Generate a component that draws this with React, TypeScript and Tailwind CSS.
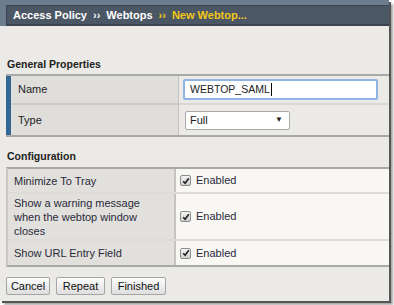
import React from "react";

const font = { fontFamily: '"Liberation Sans", Arial, sans-serif' };

function Check() {
  return (
    <span className="inline-flex h-[11px] w-[11px] items-center justify-center rounded-[2px] border border-[#8d8d8d] bg-gradient-to-b from-[#f4f4f4] to-[#cfcfcf]">
      <svg width="8" height="8" viewBox="0 0 8 8">
        <path d="M1.2 4.2 L3.1 6.2 L6.8 1.2" fill="none" stroke="#222" strokeWidth="1.6" />
      </svg>
    </span>
  );
}

function Btn({ children, w }: { children: React.ReactNode; w: string }) {
  return (
    <button
      className={`h-[18px] ${w} rounded-[2px] border border-[#a5a5a5] bg-gradient-to-b from-[#fdfdfd] to-[#dedede] text-[11px] leading-none text-[#111]`}
    >
      {children}
    </button>
  );
}

export default function App() {
  return (
    <div className="h-[305px] w-[394px] bg-white" style={font}>
      <div className="h-[301px] w-[389px] bg-[#ebeae6] shadow-[2px_2px_0_#555,4px_4px_2px_rgba(0,0,0,0.35)] overflow-hidden">
        <div className="bg-[#6e7d8e] pl-[6px] pt-[5px]">
          <div className="flex h-[21px] items-center border-b-2 border-l border-t border-[#3b4450] bg-[#4b5765] pl-[6px] text-[11px] font-bold text-white">
            <span>Access Policy</span>
            <span className="mx-[6px] text-[11px] leading-none">››</span>
            <span>Webtops</span>
            <span className="mx-[6px] text-[11px] leading-none text-[#f2c818]">››</span>
            <span className="text-[#f2c818]">New Webtop...</span>
          </div>
        </div>

        <div className="pl-[6px]">
          <div className="pl-[1px] pt-[32px] pb-[3px] text-[10.5px] font-bold leading-[13px] text-[#222]">General Properties</div>
          <div className="border-y-2 border-[#a9a9a7]">
            <div className="flex border-l-[5px] border-[#336597]">
              <div className="flex w-[168px] flex-col border-r border-[#c4c3bf] bg-[#dfdedb]">
                <div className="flex h-[29px] items-center border-b-2 border-[#cbcac6] pl-[7px] text-[11px] text-[#222]">Name</div>
                <div className="flex h-[30px] items-center pl-[7px] text-[11px] text-[#222]">Type</div>
              </div>
              <div className="flex flex-1 flex-col bg-[#ebeae6]">
                <div className="flex h-[29px] items-center border-b-2 border-[#d9d8d4] pl-[4px]">
                  <div className="flex h-[21px] w-[195px] items-center rounded-[2px] border-2 border-[#8fb3e3] bg-white pl-[5px] text-[10.5px] text-[#222]">
                    WEBTOP_SAML<span className="ml-[1px] inline-block h-[13px] w-[1px] bg-black" />
                  </div>
                </div>
                <div className="flex h-[30px] items-center pl-[6px]">
                  <div className="flex h-[19px] w-[105px] items-center justify-between rounded-[2px] border border-[#a9a9a9] bg-white pl-[4px] pr-[6px] text-[11px] text-[#222]">
                    <span>Full</span>
                    <span className="text-[8px]">▼</span>
                  </div>
                </div>
              </div>
            </div>
          </div>

          <div className="pl-[1px] pt-[13px] pb-[4px] text-[10.5px] font-bold leading-[13px] text-[#222]">Configuration</div>
          <div className="border-y-2 border-[#a9a9a7] border-l-2 border-l-[#c8c7c3]">
            {[
              { h: "h-[23px]", label: "Minimize To Tray" },
              { h: "h-[45px]", label: "Show a warning message when the webtop window closes" },
              { h: "h-[24px]", label: "Show URL Entry Field", last: true },
            ].map((r, i) => (
              <div key={i} className={`flex ${r.last ? "" : "border-b-2 border-[#dddcd8]"}`}>
                <div className={`${r.h} flex w-[168px] items-center border-r-2 border-[#c4c3bf] bg-[#e1e0dc] pl-[6px] pr-[14px] text-[11px] leading-[14px] text-[#2a2a3a]`}>
                  {r.label}
                </div>
                <div className="flex flex-1 items-center gap-[5px] bg-[#f8f7f4] pl-[4px] text-[11px] text-[#2a2a3a]">
                  <Check />
                  <span>Enabled</span>
                </div>
              </div>
            ))}
          </div>

          <div className="flex gap-[6px] pt-[10px]">
            <Btn w="w-[44px]">Cancel</Btn>
            <Btn w="w-[49px]">Repeat</Btn>
            <Btn w="w-[55px]">Finished</Btn>
          </div>
        </div>
      </div>
    </div>
  );
}
